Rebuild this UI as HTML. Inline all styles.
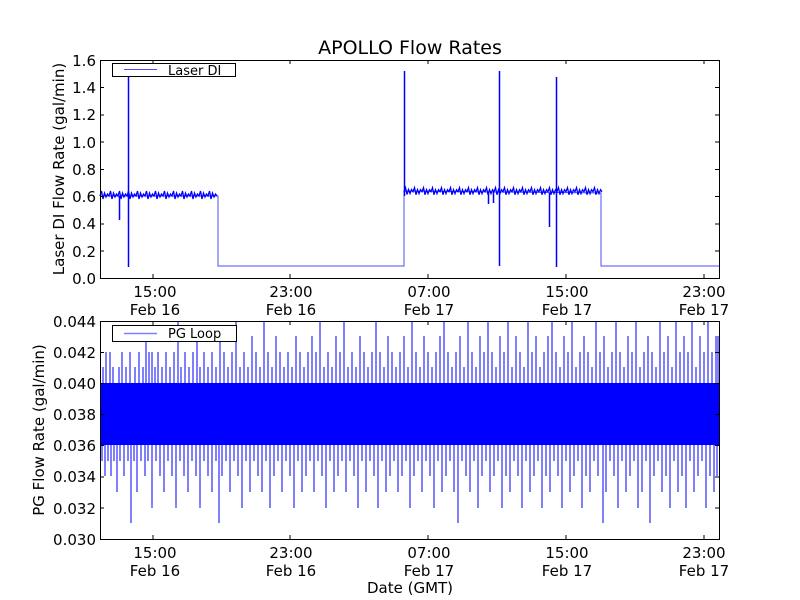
<!DOCTYPE html>
<html><head><meta charset="utf-8"><style>
html,body{margin:0;padding:0;background:#fff;}
svg{display:block;font-family:"DejaVu Sans","Liberation Sans",sans-serif;}
</style></head><body>
<svg width="800" height="600" viewBox="0 0 800 600" xmlns="http://www.w3.org/2000/svg">
<rect width="800" height="600" fill="#fff"/>
<text x="410" y="54" font-size="19" text-anchor="middle">APOLLO Flow Rates</text>

<!-- TOP PLOT -->
<g stroke="#0000ff" fill="none">
  <path d="M100 196 L218 196 L218 266 L404 266 L404 191 L601 193 L601 266 L719 266" stroke-width="1" stroke="#4d4dff"/>
  <path stroke-width="1.3" d="M100 196 l1.5-5l1.5 8l1.5-6l1.5 4l1.5-3l1.5 2 l1.5-5l1.5 8l1.5-6l1.5 4l1.5-3l1.5 2 l1.5-5l1.5 8l1.5-6l1.5 4l1.5-3l1.5 2 l1.5-5l1.5 8l1.5-6l1.5 4l1.5-3l1.5 2 l1.5-5l1.5 8l1.5-6l1.5 4l1.5-3l1.5 2 l1.5-5l1.5 8l1.5-6l1.5 4l1.5-3l1.5 2 l1.5-5l1.5 8l1.5-6l1.5 4l1.5-3l1.5 2 l1.5-5l1.5 8l1.5-6l1.5 4l1.5-3l1.5 2 l1.5-5l1.5 8l1.5-6l1.5 4l1.5-3l1.5 2 l1.5-5l1.5 8l1.5-6l1.5 4l1.5-3l1.5 2 l1.5-5l1.5 8l1.5-6l1.5 4l1.5-3l1.5 2 l1.5-5l1.5 8l1.5-6l1.5 4l1.5-3l1.5 2 l1.5-5l1.5 8l1.5-6l1.5 4l1.5-3l1.5 2"/>
  <path stroke-width="1.3" d="M404 191.5 l1.5-4l1.5 7l1.5-5l1.5 4l1.5-4l1.5 2.2 l1.5-4l1.5 7l1.5-5l1.5 4l1.5-4l1.5 2 l1.5-4l1.5 7l1.5-5l1.5 4l1.5-4l1.5 2 l1.5-4l1.5 7l1.5-5l1.5 4l1.5-4l1.5 2 l1.5-4l1.5 7l1.5-5l1.5 4l1.5-4l1.5 2 l1.5-4l1.5 7l1.5-5l1.5 4l1.5-4l1.5 2 l1.5-4l1.5 7l1.5-5l1.5 4l1.5-4l1.5 2 l1.5-4l1.5 7l1.5-5l1.5 4l1.5-4l1.5 2 l1.5-4l1.5 7l1.5-5l1.5 4l1.5-4l1.5 2 l1.5-4l1.5 7l1.5-5l1.5 4l1.5-4l1.5 2 l1.5-4l1.5 7l1.5-5l1.5 4l1.5-4l1.5 2 l1.5-4l1.5 7l1.5-5l1.5 4l1.5-4l1.5 2 l1.5-4l1.5 7l1.5-5l1.5 4l1.5-4l1.5 2 l1.5-4l1.5 7l1.5-5l1.5 4l1.5-4l1.5 2 l1.5-4l1.5 7l1.5-5l1.5 4l1.5-4l1.5 2 l1.5-4l1.5 7l1.5-5l1.5 4l1.5-4l1.5 2 l1.5-4l1.5 7l1.5-5l1.5 4l1.5-4l1.5 2 l1.5-4l1.5 7l1.5-5l1.5 4l1.5-4l1.5 2 l1.5-4l1.5 7l1.5-5l1.5 4l1.5-4l1.5 2 l1.5-4l1.5 7l1.5-5l1.5 4l1.5-4l1.5 2 l1.5-4l1.5 7l1.5-5l1.5 4l1.5-4l1.5 2 l1.5-4l1.5 7l1.5-5l1.5 4l1.5-4l1.5 2"/>
  <path d="M119.5 196 V220 M128.5 196 V74 M128.5 196 V267 M404.5 196 V71 M499.5 192 V71 M499.5 192 V266 M556.5 193 V77 M556.5 193 V267 M549.5 193 V227 M488.5 192 V204 M493.5 192 V203" stroke-width="1.5"/>
</g>
<rect x="100.5" y="60.5" width="619" height="218" fill="none" stroke="#000" stroke-width="1"/>
<rect x="112.5" y="63.5" width="123" height="13" fill="#fff" stroke="#000"/>
<line x1="124" y1="69.5" x2="157" y2="69.5" stroke="#4d4dff"/>
<text x="168" y="75" font-size="13">Laser DI</text>
<g stroke="#000">
  <path d="M153 278V274M290 278V274M428 278V274M566 278V274M704 278V274M153 60V64M290 60V64M428 60V64M566 60V64M704 60V64"/>
  <path d="M100 60.5h4M100 87.5h4M100 115h4M100 142h4M100 169.5h4M100 196.5h4M100 224h4M100 251h4M719 60.5h-4M719 87.5h-4M719 115h-4M719 142h-4M719 169.5h-4M719 196.5h-4M719 224h-4M719 251h-4"/>
</g>
<g font-size="15" text-anchor="end">
  <text x="96" y="66">1.6</text><text x="96" y="93">1.4</text><text x="96" y="120">1.2</text><text x="96" y="148">1.0</text><text x="96" y="175">0.8</text><text x="96" y="202">0.6</text><text x="96" y="229">0.4</text><text x="96" y="257">0.2</text><text x="96" y="284">0.0</text>
</g>
<g font-size="15" text-anchor="middle">
  <text x="155" y="297">15:00</text><text x="155" y="315">Feb 16</text>
  <text x="291" y="297">23:00</text><text x="291" y="315">Feb 16</text>
  <text x="429" y="297">07:00</text><text x="429" y="315">Feb 17</text>
  <text x="567" y="297">15:00</text><text x="567" y="315">Feb 17</text>
  <text x="704" y="297">23:00</text><text x="704" y="315">Feb 17</text>
</g>
<text transform="translate(64 169) rotate(-90)" font-size="15" text-anchor="middle">Laser DI Flow Rate (gal/min)</text>

<!-- BOTTOM PLOT -->
<rect x="100" y="383" width="619" height="62" fill="#0000ff"/>
<g stroke="#0000ff" stroke-width="1.3" shape-rendering="crispEdges">
<path d="M103 383V367M106 383V352M110 383V352M113 383V367M119 383V367M122 383V352M126 383V367M130 383V352M135 383V367M139 383V352M143 383V367M146 383V336M149 383V352M152 383V352M155 383V367M158 383V352M162 383V367M166 383V352M170 383V367M174 383V352M178 383V321M181 383V367M185 383V352M189 383V367M193 383V352M197 383V336M200 383V367M204 383V352M208 383V367M212 383V352M216 383V367M220 383V336M224 383V352M228 383V367M232 383V352M236 383V321M240 383V367M244 383V352M248 383V367M252 383V336M256 383V352M260 383V367M264 383V321M268 383V352M272 383V367M276 383V336M280 383V352M284 383V367M288 383V352M292 383V367M296 383V336M300 383V352M304 383V367M308 383V352M312 383V336M316 383V352M320 383V321M324 383V367M328 383V352M332 383V367M336 383V336M340 383V352M344 383V321M348 383V367M352 383V352M356 383V367M360 383V336M364 383V352M368 383V367M372 383V352M376 383V321M380 383V352M384 383V367M388 383V336M392 383V352M396 383V367M400 383V352M404 383V336M408 383V367M412 383V321M416 383V352M420 383V367M424 383V336M428 383V352M432 383V367M436 383V352M440 383V336M444 383V321M448 383V352M452 383V367M456 383V352M460 383V336M464 383V367M468 383V321M472 383V352M476 383V367M480 383V336M484 383V352M488 383V321M492 383V352M496 383V367M500 383V336M504 383V352M508 383V321M512 383V367M516 383V336M520 383V352M524 383V367M528 383V321M532 383V352M536 383V336M540 383V367M544 383V352M548 383V336M552 383V321M556 383V352M560 383V367M564 383V336M568 383V352M572 383V321M576 383V367M580 383V352M584 383V336M588 383V352M592 383V367M596 383V321M600 383V352M604 383V336M608 383V367M612 383V352M616 383V321M620 383V352M624 383V367M628 383V336M632 383V352M636 383V321M640 383V367M644 383V352M648 383V336M652 383V352M656 383V367M660 383V321M664 383V352M668 383V336M672 383V367M676 383V321M680 383V352M684 383V336M688 383V352M692 383V321M696 383V367M700 383V336M704 383V352M708 383V321M712 383V352M716 383V336M718 383V336"/>
<path d="M102 445V461M105 445V476M108 445V461M111 445V476M114 445V461M117 445V492M120 445V461M124 445V476M128 445V461M131 445V523M134 445V461M137 445V492M141 445V461M145 445V476M148 445V461M152 445V508M156 445V461M160 445V476M164 445V492M168 445V461M172 445V476M176 445V508M180 445V461M184 445V476M188 445V492M192 445V461M196 445V476M200 445V508M204 445V461M208 445V476M212 445V492M216 445V461M219 445V523M222 445V476M226 445V461M230 445V492M234 445V461M238 445V476M242 445V508M246 445V461M250 445V492M254 445V461M258 445V476M262 445V492M266 445V461M270 445V508M274 445V476M278 445V461M282 445V492M286 445V461M290 445V476M294 445V508M298 445V461M302 445V492M306 445V476M310 445V461M314 445V492M318 445V461M322 445V476M326 445V508M330 445V461M334 445V492M338 445V476M342 445V461M346 445V492M350 445V461M354 445V476M358 445V508M362 445V461M366 445V492M370 445V461M374 445V476M378 445V508M382 445V461M386 445V492M390 445V476M394 445V461M398 445V492M402 445V476M406 445V461M410 445V508M414 445V476M418 445V461M422 445V492M426 445V461M430 445V476M434 445V508M438 445V461M442 445V492M446 445V476M450 445V461M454 445V492M458 445V523M462 445V461M466 445V476M470 445V492M474 445V461M478 445V508M482 445V476M486 445V461M490 445V492M494 445V476M498 445V461M502 445V508M506 445V476M510 445V492M514 445V461M518 445V476M522 445V508M526 445V461M530 445V492M534 445V476M538 445V461M542 445V508M546 445V476M550 445V492M554 445V461M558 445V476M562 445V508M566 445V461M570 445V492M574 445V476M578 445V461M582 445V508M586 445V476M590 445V492M594 445V461M598 445V476M603 445V523M606 445V492M610 445V461M614 445V476M618 445V508M622 445V461M626 445V492M630 445V476M634 445V461M638 445V508M642 445V492M646 445V461M650 445V523M654 445V476M658 445V461M662 445V492M666 445V476M670 445V508M674 445V461M678 445V492M682 445V476M686 445V508M690 445V461M694 445V492M698 445V476M702 445V461M706 445V508M710 445V476M714 445V492M717 445V476"/>
</g>
<rect x="100.5" y="321.5" width="619" height="218" fill="none" stroke="#000" stroke-width="1"/>
<rect x="112.5" y="325.5" width="124" height="16" fill="#fff" stroke="#000"/>
<line x1="124" y1="333.5" x2="157" y2="333.5" stroke="#8080ff" stroke-width="1.5"/>
<text x="168" y="338" font-size="13">PG Loop</text>
<g stroke="#000">
  <path d="M153 539V535M290 539V535M428 539V535M566 539V535M704 539V535M153 321V325M290 321V325M428 321V325M566 321V325M704 321V325"/>
  <path d="M100 352.5h4M100 383.5h4M100 414.5h4M100 445.5h4M100 477h4M100 508h4M719 352.5h-4M719 383.5h-4M719 414.5h-4M719 445.5h-4M719 477h-4M719 508h-4"/>
</g>
<g font-size="15" text-anchor="end">
  <text x="96" y="327">0.044</text><text x="96" y="358">0.042</text><text x="96" y="389">0.040</text><text x="96" y="420">0.038</text><text x="96" y="451">0.036</text><text x="96" y="482">0.034</text><text x="96" y="514">0.032</text><text x="96" y="545">0.030</text>
</g>
<g font-size="15" text-anchor="middle">
  <text x="155" y="558">15:00</text><text x="155" y="576">Feb 16</text>
  <text x="291" y="558">23:00</text><text x="291" y="576">Feb 16</text>
  <text x="429" y="558">07:00</text><text x="429" y="576">Feb 17</text>
  <text x="567" y="558">15:00</text><text x="567" y="576">Feb 17</text>
  <text x="704" y="558">23:00</text><text x="704" y="576">Feb 17</text>
</g>
<text x="410" y="593" font-size="15" text-anchor="middle">Date (GMT)</text>
<text transform="translate(44 430) rotate(-90)" font-size="15" text-anchor="middle">PG Flow Rate (gal/min)</text>
</svg>
</body></html>
